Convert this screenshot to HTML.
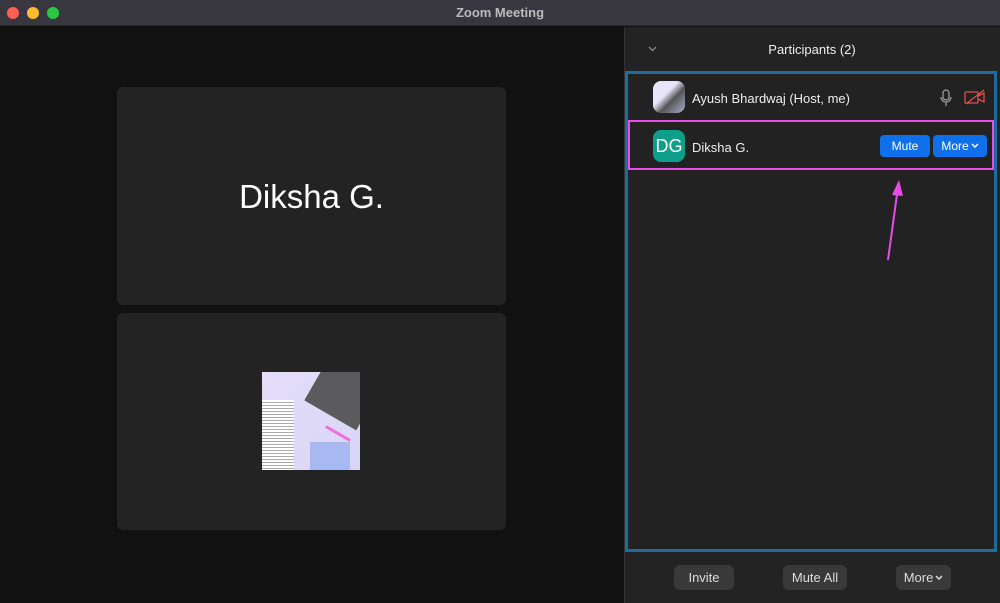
<!DOCTYPE html>
<html><head><style>
*{margin:0;padding:0;box-sizing:border-box}
body{width:1000px;height:603px;background:#111;font-family:"Liberation Sans",sans-serif;position:relative;overflow:hidden;color:#eee}
.abs{position:absolute}
.dot{position:absolute;top:7px;width:12px;height:12px;border-radius:50%}
.btn{position:absolute;background:#393939;border-radius:6px;color:#ddd;font-size:13px;text-align:center;line-height:25px;height:25px}
.chev{display:inline-block;width:8px;height:5px;margin-left:2px;vertical-align:2px}
</style></head><body>
<div class="abs" style="left:0;top:0;width:1000px;height:26px;background:#38363e;border-bottom:1px solid #2a2a2a"></div>
<div class="dot" style="left:7px;background:#fe5f57"></div>
<div class="dot" style="left:27px;background:#febc2e"></div>
<div class="dot" style="left:47px;background:#28c840"></div>
<div class="abs" style="left:0;top:5px;width:1000px;text-align:center;font-size:13px;font-weight:bold;color:#bbb">Zoom Meeting</div>
<div class="abs" style="left:117px;top:87px;width:389px;height:218px;background:#232323;border-radius:6px"></div>
<div class="abs" style="left:117px;top:178px;width:389px;text-align:center;font-size:33px;color:#fff">Diksha G.</div>
<div class="abs" style="left:117px;top:313px;width:389px;height:217px;background:#232323;border-radius:6px"></div>
<div class="abs" style="left:262px;top:372px;width:98px;height:98px;background:linear-gradient(135deg,#e4defa,#d8d5f5);overflow:hidden">
 <div class="abs" style="left:0;top:28px;width:32px;height:70px;background:repeating-linear-gradient(#fff 0 2px,#aaa 2px 3px)"></div>
 <div class="abs" style="left:52px;top:-8px;width:60px;height:55px;background:#5b5b5e;transform:rotate(30deg)"></div>
 <div class="abs" style="left:48px;top:70px;width:40px;height:28px;background:#a8b8f0"></div>
 <div class="abs" style="left:62px;top:60px;width:28px;height:3px;background:#f06de0;transform:rotate(30deg)"></div>
</div>
<div class="abs" style="left:624px;top:27px;width:376px;height:576px;background:#232323;border-left:1px solid #333"></div>
<svg class="abs" style="left:648px;top:46px" width="9" height="6"><path d="M1 1l3.5 3.5L8 1" stroke="#888" stroke-width="1.3" fill="none"/></svg>
<div class="abs" style="left:624px;top:42px;width:376px;text-align:center;font-size:13px;color:#eee">Participants (2)</div>
<div class="abs" style="left:625px;top:71px;width:372px;height:481px;border:3px solid #1f6a9e;background:#222"></div>
<div class="abs" style="left:653px;top:81px;width:32px;height:32px;border-radius:8px;background:linear-gradient(135deg,#e8e4fa 40%,#555 60%,#aac)"></div>
<div class="abs" style="left:692px;top:91px;font-size:13px">Ayush Bhardwaj (Host, me)</div>
<svg class="abs" style="left:940px;top:89px" width="12" height="18" viewBox="0 0 12 18"><rect x="3" y="1" width="6" height="10" rx="3" fill="none" stroke="#999" stroke-width="1.3"/><path d="M1 8a5 5 0 0 0 10 0M6 13v4" fill="none" stroke="#999" stroke-width="1.3"/></svg>
<svg class="abs" style="left:964px;top:89px" width="22" height="16" viewBox="0 0 22 16"><rect x="1" y="3" width="13" height="11" rx="1" fill="none" stroke="#e0504a" stroke-width="1.3"/><path d="M14 7l6-3v9l-6-3M2 15L20 1" fill="none" stroke="#e0504a" stroke-width="1.3"/></svg>
<div class="abs" style="left:628px;top:120px;width:366px;height:50px;border:2px solid #e84ce6"></div>
<div class="abs" style="left:653px;top:130px;width:32px;height:32px;border-radius:8px;background:#0e9e8a;color:#fff;font-size:18px;text-align:center;line-height:32px">DG</div>
<div class="abs" style="left:692px;top:140px;font-size:13px">Diksha G.</div>
<div class="abs" style="left:880px;top:135px;width:50px;height:22px;background:#0e71eb;border-radius:4px;color:#fff;font-size:12px;text-align:center;line-height:22px">Mute</div>
<div class="abs" style="left:933px;top:135px;width:54px;height:22px;background:#0e71eb;border-radius:4px;color:#fff;font-size:12px;text-align:center;line-height:22px">More<svg class="chev" viewBox="0 0 8 5"><path d="M1 1l3 3 3-3" stroke="#fff" stroke-width="1.5" fill="none"/></svg></div>
<svg class="abs" style="left:880px;top:175px" width="30" height="90"><path d="M8 85L18 12" stroke="#e84ce6" stroke-width="2" fill="none"/><path d="M12 20L19 5L23 21Z" fill="#e84ce6"/></svg>
<div class="btn" style="left:674px;top:565px;width:60px">Invite</div>
<div class="btn" style="left:783px;top:565px;width:64px">Mute All</div>
<div class="btn" style="left:896px;top:565px;width:55px">More<svg class="chev" viewBox="0 0 8 5"><path d="M1 1l3 3 3-3" stroke="#ddd" stroke-width="1.5" fill="none"/></svg></div>
</body></html>
